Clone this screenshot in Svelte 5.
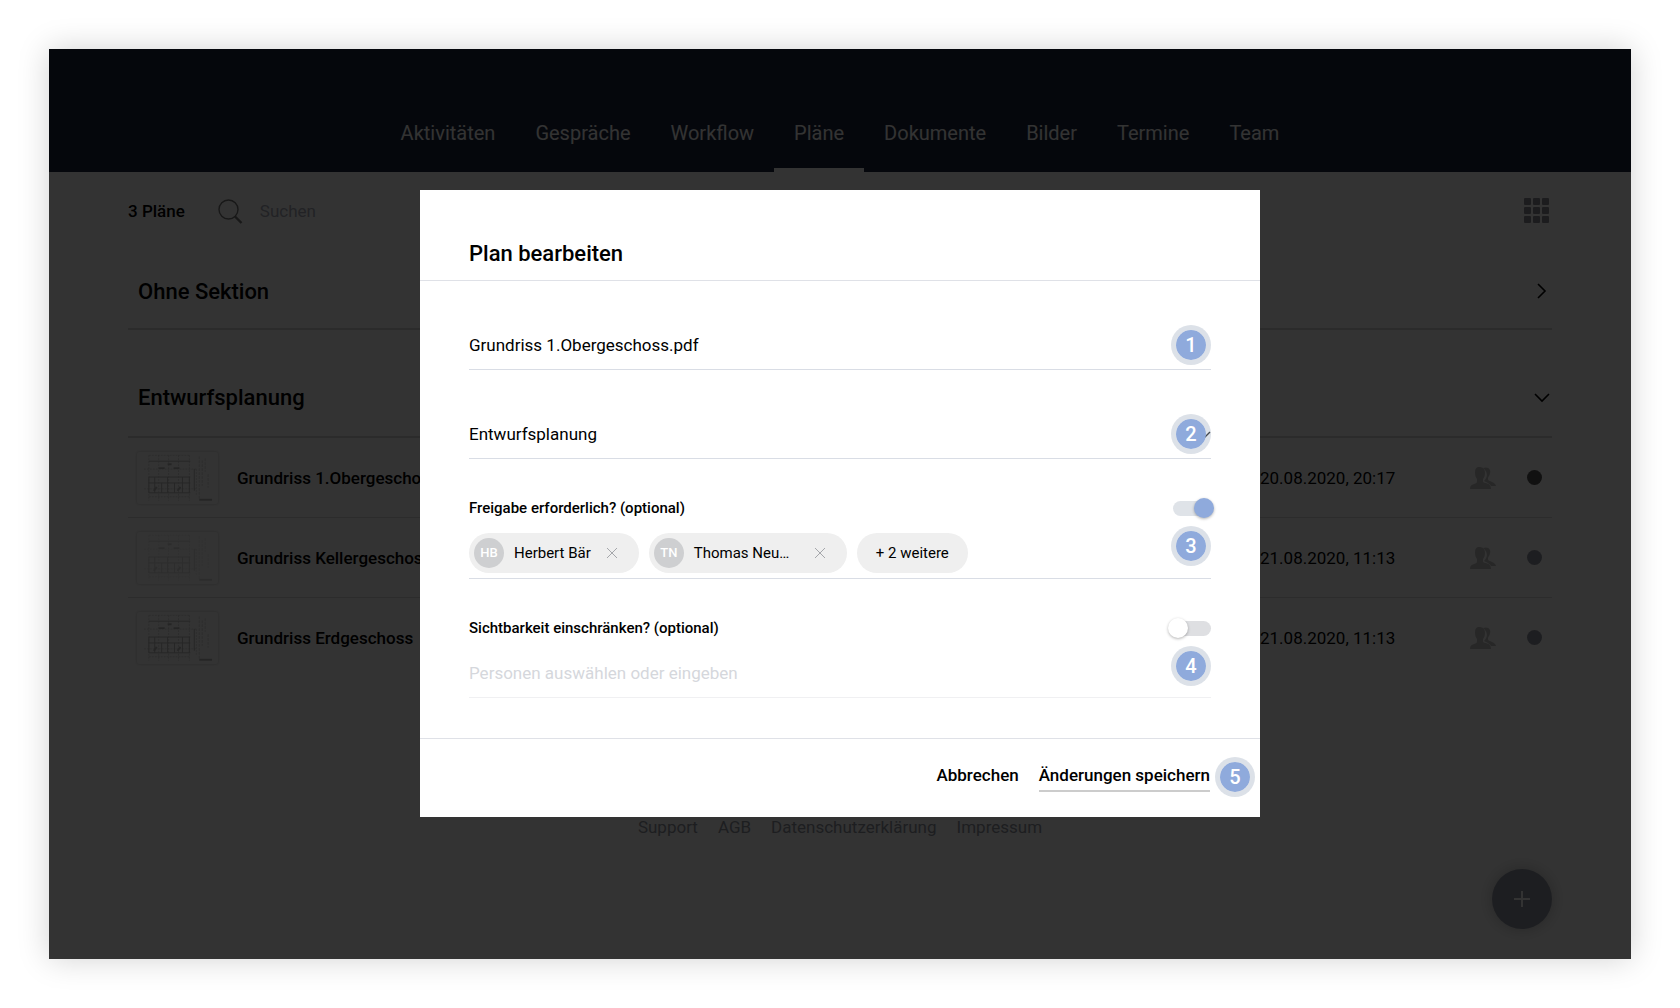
<script>
  const tabs = ['Aktivitäten', 'Gespräche', 'Workflow', 'Pläne', 'Dokumente', 'Bilder', 'Termine', 'Team'];

  const plans = [
    { name: 'Grundriss 1.Obergeschoss', date: '20.08.2020, 20:17', status: 'released', strong: true },
    { name: 'Grundriss Kellergeschoss', date: '21.08.2020, 11:13', status: 'pending', strong: false },
    { name: 'Grundriss Erdgeschoss', date: '21.08.2020, 11:13', status: 'pending', strong: true }
  ];

  const people = [
    { initials: 'HB', name: 'Herbert Bär', cut: false },
    { initials: 'TN', name: 'Thomas Neu…', cut: true }
  ];

  const links = ['Support', 'AGB', 'Datenschutzerklärung', 'Impressum'];

  let fileName = $state('Grundriss 1.Obergeschoss.pdf');
  let section = $state('Entwurfsplanung');
  let approval = $state(true);
  let restricted = $state(false);
</script>

<div class="window">
  <header class="topbar">
    <nav>
      {#each tabs as tab (tab)}
        <a href="#{tab}" class:active={tab === 'Pläne'}>{tab}</a>
      {/each}
    </nav>
  </header>

  <main>
    <div class="toolbar">
      <strong>3 Pläne</strong>
      <label class="search">
        <svg width="25" height="25" viewBox="0 0 25 25" fill="none" stroke="currentColor">
          <circle cx="10.5" cy="10.5" r="9.5" stroke-width="1.4" />
          <path d="M17 17.5l6.5 6.5" stroke-width="2.4" />
        </svg>
        <input type="text" placeholder="Suchen" aria-label="Suchen" />
      </label>
      <button type="button" class="grid-toggle" aria-label="Kachelansicht">
        <svg width="26" height="26" viewBox="0 0 26 26" fill="currentColor">
          {#each [0, 9, 18] as y}
            {#each [0, 9, 18] as x}
              <rect {x} {y} width="7" height="7" rx="1" />
            {/each}
          {/each}
        </svg>
      </button>
    </div>

    <section class="group closed">
      <h2>Ohne Sektion</h2>
      <button type="button" aria-label="Ohne Sektion öffnen">
        <svg width="20" height="20" viewBox="0 0 20 20" fill="none" stroke="currentColor" stroke-width="1.6">
          <path d="M6 2l7 7-7 7" />
        </svg>
      </button>
    </section>

    <section class="group">
      <h2>Entwurfsplanung</h2>
      <button type="button" aria-label="Entwurfsplanung schließen">
        <svg width="20" height="20" viewBox="0 0 20 20" fill="none" stroke="currentColor" stroke-width="1.6">
          <path d="M3 6l7 7 7-7" />
        </svg>
      </button>
    </section>

    <table>
      <tbody>
        {#each plans as plan (plan.name)}
          <tr>
            <td class="thumb-cell">
              <svg class="thumb" class:strong={plan.strong} width="81" height="52" viewBox="0 0 82 52" fill="none" stroke="currentColor">
                <path class="faint" d="M12 3h42M7 17h53M7 37h53M12 45h42M12 3v46M22 3v46M32 3v46M42 3v46M53 3v46M60 17v26" stroke-dasharray="2 1" />
                <path d="M12 9h42M12 25h42M12 31h42M12 41h42M12 25v16M18 25v16M25 31v10M31 25v16M38 31v10M46 25v16M53 25v16M58 17v22" />
                <path d="M22 16h6M37 16h6M31 12h4M17 39l3-4M41 39l3-4" stroke-width="2" />
                <path class="faint" d="M63 4v44M66 8v26M69 6v14M72 22v14" stroke-dasharray="3 1" />
                <path d="M63 48h13" stroke-width="2" />
              </svg>
            </td>
            <td class="name">{plan.name}</td>
            <td class="date">{plan.date}</td>
            <td class="people">
              <svg width="26" height="22" viewBox="0 0 26 22" fill="currentColor">
                <path d="M13 1c2-1 6-1 7 2 1 3-1 6-2 8 0 2 0 2 2 3l4 2c1 1 2 2 2 3h-5c-1-2-3-3-5-4l-2-1c4-4 4-9-1-13z" />
                <path d="M9 0c4 0 6 2 6 6 0 3-1 5-2 6v2c0 1 1 2 3 2 3 1 5 2 5 6H0c0-3 1-4 4-5 2-1 3-1 3-3v-2C6 11 5 9 5 6c0-4 1-6 4-6z" />
              </svg>
            </td>
            <td class="state"><span class="dot {plan.status}"></span></td>
          </tr>
        {/each}
      </tbody>
    </table>
  </main>

  <footer class="links">
    {#each links as link (link)}
      <a href="#{link}">{link}</a>
    {/each}
  </footer>

  <button type="button" class="fab" aria-label="Plan hinzufügen">
    <svg width="16" height="16" viewBox="0 0 16 16" fill="none" stroke="currentColor" stroke-width="2">
      <path d="M8 0v16M0 8h16" />
    </svg>
  </button>

  <div class="backdrop">
    <form class="modal" role="dialog" aria-labelledby="dialog-title" onsubmit={(e) => e.preventDefault()}>
      <h1 id="dialog-title">Plan bearbeiten</h1>

      <div class="body">
        <div class="field">
          <input type="text" aria-label="Name" bind:value={fileName} />
          <span class="badge">1</span>
        </div>

        <div class="field">
          <select aria-label="Sektion" bind:value={section}>
            <option>Entwurfsplanung</option>
            <option>Ohne Sektion</option>
          </select>
          <svg class="caret" width="16" height="10" viewBox="0 0 16 10" fill="none" stroke="currentColor" stroke-width="1.4">
            <path d="M1 1l7 7 7-7" />
          </svg>
          <span class="badge">2</span>
        </div>

        <div class="field">
          <div class="switch-row">
            <label for="approval">Freigabe erforderlich? (optional)</label>
            <input id="approval" type="checkbox" role="switch" bind:checked={approval} />
          </div>
          <div class="chips">
            {#each people as person (person.initials)}
              <div class="chip">
                <span class="avatar">{person.initials}</span>
                <span class="person" class:cut={person.cut}>{person.name}</span>
                <button type="button" aria-label="{person.name} entfernen">
                  <svg width="12" height="12" viewBox="0 0 12 12" fill="none" stroke="currentColor">
                    <path d="M1 1l10 10M11 1L1 11" />
                  </svg>
                </button>
              </div>
            {/each}
            <button type="button" class="chip more">+ 2 weitere</button>
          </div>
          <span class="badge low">3</span>
        </div>

        <div class="field disabled">
          <div class="switch-row">
            <label for="restricted">Sichtbarkeit einschränken? (optional)</label>
            <input id="restricted" type="checkbox" role="switch" bind:checked={restricted} />
          </div>
          <input class="picker" type="text" placeholder="Personen auswählen oder eingeben" aria-label="Personen" />
          <span class="badge low">4</span>
        </div>
      </div>

      <div class="actions">
        <button type="button">Abbrechen</button>
        <button type="submit" class="save">Änderungen speichern</button>
        <span class="badge">5</span>
      </div>
    </form>
  </div>
</div>

<style>
  :global(body) {
    background: #fff;
  }

  .window {
    position: relative;
    box-sizing: border-box;
    min-height: calc(100vh - 98px);
    margin: 49px;
    background: #fff;
    box-shadow: 0 0 30px rgb(0 0 0 / 0.18);
    font-family: Roboto, sans-serif;
    font-size: 17px;
    line-height: 20px;
    color: #000;
    display: flex;
    flex-direction: column;
  }

  button {
    padding: 0;
    border: 0;
    background: none;
    font: inherit;
    color: inherit;
    cursor: pointer;
  }

  input,
  select {
    border: 0;
    padding: 0;
    background: none;
    font: inherit;
    color: inherit;
    outline: none;
  }

  svg {
    display: block;
  }

  .topbar {
    display: flex;
    justify-content: center;
    align-items: flex-end;
    height: 123px;
    background: #19233c;
  }

  nav {
    display: flex;
  }

  nav a {
    padding: 0 20px 25px;
    border-bottom: 4px solid transparent;
    font-size: 20px;
    color: #fff;
    text-decoration: none;
  }

  nav a.active {
    border-color: #fff;
  }

  main {
    padding: 0 79px;
  }

  .toolbar {
    display: flex;
    align-items: center;
    height: 78px;
  }

  .toolbar strong {
    font-weight: 500;
  }

  .search {
    display: flex;
    align-items: center;
    gap: 17px;
    margin-left: 33px;
    color: #777;
  }

  .search input::placeholder {
    color: #a8acb8;
    opacity: 1;
  }

  .grid-toggle {
    margin-left: auto;
    margin-right: 2px;
    color: #8c8c96;
  }

  .group {
    display: flex;
    align-items: center;
    justify-content: space-between;
    height: 76px;
    padding: 30px 0 0 10px;
    border-bottom: 2px solid #d4d4d4;
  }

  .group.closed {
    height: 72px;
    padding-top: 6px;
  }

  .group h2 {
    margin: 0;
    font-size: 22px;
    line-height: 28px;
    font-weight: 500;
  }

  table {
    width: 100%;
    border-collapse: collapse;
    table-layout: fixed;
  }

  td {
    height: 79px;
    padding: 0;
    border-bottom: 1px solid #dadada;
    vertical-align: middle;
  }

  tr:last-child td {
    border-bottom: 0;
  }

  .thumb-cell {
    width: 100px;
    padding-left: 9px;
  }

  .thumb {
    border-radius: 2px;
    box-shadow: 0 0 3px rgb(0 0 0 / 0.25);
    color: #ddd;
  }

  .thumb.strong {
    color: #bbb;
  }

  .thumb .faint {
    opacity: 0.5;
  }

  .name {
    font-weight: 500;
  }

  .date {
    width: 210px;
  }

  .people {
    width: 57px;
    color: #c4c4c4;
  }

  .state {
    width: 25px;
  }

  .dot {
    display: block;
    width: 15px;
    height: 15px;
    border-radius: 50%;
    background: #9297a3;
  }

  .dot.released {
    background: #555;
  }

  .links {
    display: flex;
    justify-content: center;
    gap: 20px;
    margin-top: 140px;
  }

  .links a {
    color: #9296a2;
    text-decoration: none;
  }

  .fab {
    display: grid;
    place-items: center;
    width: 60px;
    height: 60px;
    margin: auto 79px 30px auto;
    border-radius: 50%;
    background: #9298a6;
    box-shadow: 0 0 16px rgb(0 0 0 / 0.25);
    color: #fff;
  }

  .backdrop {
    position: absolute;
    inset: 0;
    display: flex;
    justify-content: center;
    align-items: flex-start;
    padding-top: 141px;
    background: rgb(0 0 0 / 0.8);
  }

  .modal {
    width: min(840px, 90%);
    background: #fff;
  }

  .modal h1 {
    margin: 0;
    padding: 50px 49px 12px;
    border-bottom: 1px solid #dfe1e7;
    font-size: 22px;
    line-height: 28px;
    font-weight: 500;
  }

  .body {
    display: grid;
    gap: 39px;
    padding: 39px 49px 40px;
  }

  .field {
    position: relative;
    border-bottom: 1px solid #d9dde5;
  }

  .field.disabled {
    border-color: #f0f0f2;
  }

  .field input[type='text'],
  .field select {
    display: block;
    width: 100%;
    height: 49px;
    appearance: none;
  }

  .field .picker {
    margin-top: 10px;
  }

  .picker::placeholder {
    color: #d5d7dc;
    opacity: 1;
  }

  .caret {
    position: absolute;
    top: 22px;
    right: 0;
    pointer-events: none;
  }

  .badge {
    box-sizing: border-box;
    width: 40px;
    height: 40px;
    border: 5px solid rgb(167 180 197 / 0.4);
    border-radius: 50%;
    background: #8faadc;
    background-clip: padding-box;
    color: #fff;
    font-size: 20px;
    font-weight: 500;
    line-height: 30px;
    text-align: center;
  }

  .field .badge {
    position: absolute;
    top: 5px;
    right: 0;
  }

  .field .badge.low {
    top: 28px;
  }

  .switch-row {
    display: flex;
    justify-content: space-between;
    align-items: center;
    height: 20px;
  }

  .switch-row label {
    font-size: 15px;
    font-weight: 500;
  }

  .switch-row input {
    position: relative;
    width: 38px;
    height: 15px;
    margin: 0;
    border-radius: 8px;
    background: #dedfe2;
    appearance: none;
    cursor: pointer;
  }

  .switch-row input::before {
    content: '';
    position: absolute;
    top: -3px;
    left: -5px;
    width: 20px;
    height: 20px;
    border-radius: 50%;
    background: #fff;
    box-shadow: 0 1px 3px rgb(0 0 0 / 0.3);
  }

  .switch-row input:checked {
    background: #dfe3e8;
  }

  .switch-row input:checked::before {
    left: 21px;
    background: #8faadc;
  }

  .chips {
    display: flex;
    gap: 10px;
    padding: 15px 0 5px;
    font-size: 15px;
  }

  .chip {
    box-sizing: border-box;
    display: flex;
    align-items: center;
    height: 40px;
    padding: 0 21px 0 5px;
    border-radius: 20px;
    background: #efefef;
  }

  .chip.more {
    padding: 0 19px;
  }

  .avatar {
    width: 30px;
    border-radius: 50%;
    background: #cecfd1;
    color: #fff;
    font-size: 13px;
    font-weight: 500;
    line-height: 30px;
    text-align: center;
  }

  .person {
    margin: 0 15px 0 10px;
    white-space: nowrap;
  }

  .person.cut {
    width: 105px;
  }

  .chip button {
    color: #a5a7ab;
  }

  .actions {
    box-sizing: border-box;
    display: flex;
    justify-content: flex-end;
    align-items: center;
    gap: 20px;
    height: 79px;
    padding: 0 5px 2px 0;
    border-top: 1px solid #dfe1e7;
    font-weight: 500;
  }

  .actions button {
    padding: 3px 0 5px;
    border-bottom: 2px solid transparent;
  }

  .actions .save {
    border-color: #ccc;
  }

  .actions .badge {
    margin-left: -15px;
  }
</style>
